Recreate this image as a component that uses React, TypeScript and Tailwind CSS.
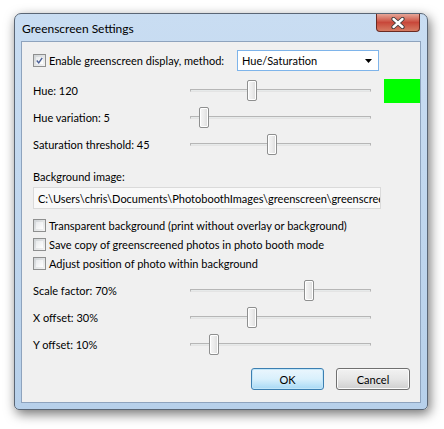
import React from 'react';

const FONT = "font-['Lato','Open_Sans',sans-serif]";

interface SliderRowProps {
  label: string;
  offset: number;
  swatch?: boolean;
}

const Slider: React.FC<{ offset: number }> = ({ offset }) => (
  <div className="relative w-[181px] h-[21px]">
    <div className="absolute left-0 right-0 top-[9px] h-[3px] border border-[#b6b6b6] border-b-[#e4e4e4] bg-[#e7eaea]" />
    <div
      className="absolute top-0 w-[10px] h-[21px] rounded-[2px] border border-[#8e8f8f] bg-gradient-to-r from-[#f6f6f6] via-[#ececec] to-[#dcdcdc] shadow-[inset_0_0_0_1px_#ffffff]"
      style={{ left: offset }}
    />
  </div>
);

const SliderRow: React.FC<SliderRowProps> = ({ label, offset, swatch }) => (
  <div className="flex items-center h-[21px]">
    <span className="w-[157px]">{label}</span>
    <Slider offset={offset} />
    {swatch && <div className="ml-[13px] w-[36px] h-[24px] bg-[#00ff00]" />}
  </div>
);

const CheckBox: React.FC<{ checked?: boolean; label: string }> = ({ checked, label }) => (
  <label className="flex items-center gap-[3px] h-[19px] whitespace-nowrap">
    <span className="w-[13px] h-[13px] shrink-0 border border-[#8e8f8f] bg-gradient-to-br from-[#cfd3d6] to-[#f5f5f5] p-[2px] flex items-center justify-center">
      <span className="w-full h-full bg-gradient-to-br from-[#e8eaec] to-[#ffffff] flex items-center justify-center">
        {checked && (
          <svg width="9" height="9" viewBox="0 0 9 9">
            <path d="M1 4.5 L3.5 7.5 L8 1" fill="none" stroke="#4a5f97" strokeWidth="1.8" />
          </svg>
        )}
      </span>
    </span>
    <span>{label}</span>
  </label>
);

export default function App() {
  return (
    <div className={`w-[444px] h-[429px] bg-white pt-[13px] pl-[14px] ${FONT} text-[11px] text-black leading-none`}>
      <div className="relative w-[414px] h-[397px] rounded-t-[7px] rounded-b-[5px] border border-[#5a6675] bg-gradient-to-b from-[#c9ddf2] to-[#b7d0ea] shadow-[2px_4px_12px_rgba(0,0,0,0.55)] flex flex-col">
        <div className="h-[27px] flex items-center justify-between pl-[7px]">
          <span className="text-[12px] text-black mt-[2px]">Greenscreen Settings</span>
          <div className="self-start mr-[7px] w-[44px] h-[18px] rounded-b-[4px] border border-[#6a2a22] border-t-0 bg-gradient-to-b from-[#e5a597] via-[#c8473a] to-[#d57a62] flex items-center justify-center">
            <svg width="14" height="12" viewBox="0 0 14 12">
              <path d="M2.5 2 L11.5 10 M11.5 2 L2.5 10" stroke="#3b3b3b" strokeWidth="4.2" strokeLinecap="round" />
              <path d="M2.5 2 L11.5 10 M11.5 2 L2.5 10" stroke="#ffffff" strokeWidth="2.4" strokeLinecap="round" />
            </svg>
          </div>
        </div>
        <div className="mx-[6px] mb-[6px] flex-1 border border-[#8ea3bd] bg-[#f0f0f0] pl-[11px] pt-[8px] flex flex-col">
          <div className="flex items-center h-[21px]">
            <div className="w-[204px]">
              <CheckBox checked label="Enable greenscreen display, method:" />
            </div>
            <div className="w-[142px] h-[21px] border border-[#7eb4ea] bg-white flex items-center justify-between pl-[4px] pr-[6px]">
              <span>Hue/Saturation</span>
              <svg width="7" height="4" viewBox="0 0 7 4">
                <path d="M0 0 H7 L3.5 4 Z" fill="#000" />
              </svg>
            </div>
          </div>
          <div className="mt-[9px] flex flex-col gap-[6px]">
            <SliderRow label="Hue: 120" offset={57} swatch />
            <SliderRow label="Hue variation: 5" offset={9} />
            <SliderRow label="Saturation threshold: 45" offset={77} />
          </div>
          <div className="mt-[16px]">Background image:</div>
          <div className="mt-[5px] w-[348px] h-[22px] border border-[#dadada] bg-[#f9f9f9] flex items-center pl-[4px] overflow-hidden whitespace-nowrap">
            C:\Users\chris\Documents\PhotoboothImages\greenscreen\greenscree
          </div>
          <div className="mt-[7px] flex flex-col">
            <CheckBox label="Transparent background (print without overlay or background)" />
            <CheckBox label="Save copy of greenscreened photos in photo booth mode" />
            <CheckBox label="Adjust position of photo within background" />
          </div>
          <div className="mt-[7px] flex flex-col gap-[6px]">
            <SliderRow label="Scale factor: 70%" offset={114} />
            <SliderRow label="X offset: 30%" offset={57} />
            <SliderRow label="Y offset: 10%" offset={19} />
          </div>
          <div className="mt-[13px] flex justify-end gap-[12px] pr-[10px]">
            <button className="w-[73px] h-[22px] rounded-[3px] border border-[#3c7fb1] bg-gradient-to-b from-[#eaf6fd] via-[#d9f0fc] to-[#a7d9f5] shadow-[inset_0_0_0_1px_#c2e6f9]">
              OK
            </button>
            <button className="w-[74px] h-[22px] rounded-[3px] border border-[#707070] bg-gradient-to-b from-[#f2f2f2] via-[#e6e6e6] to-[#cfcfcf] shadow-[inset_0_0_0_1px_#fbfbfb]">
              Cancel
            </button>
          </div>
        </div>
      </div>
    </div>
  );
}
